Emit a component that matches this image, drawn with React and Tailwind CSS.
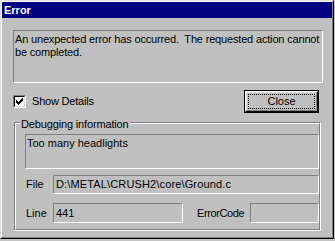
import React from "react";

function Sunken({ className = "", children }) {
  return (
    <div
      className={
        "border border-t-[#808080] border-l-[#808080] border-r-white border-b-white " +
        className
      }
    >
      {children}
    </div>
  );
}

function CheckMark() {
  const px = [
    [6, 0],
    [5, 1], [6, 1],
    [0, 2], [4, 2], [5, 2], [6, 2],
    [0, 3], [1, 3], [3, 3], [4, 3], [5, 3],
    [0, 4], [1, 4], [2, 4], [3, 4], [4, 4],
    [1, 5], [2, 5], [3, 5],
    [2, 6],
  ];
  return (
    <svg width="7" height="7" viewBox="0 0 7 7" shapeRendering="crispEdges">
      {px.map(([x, y]) => (
        <rect key={x + "-" + y} x={x} y={y} width="1" height="1" fill="#000" />
      ))}
    </svg>
  );
}

export default function App() {
  return (
    <div className="w-[335px] h-[241px] bg-[#c4c4c4] font-['Liberation_Sans',Arial,sans-serif] text-[11px] leading-[13px] text-black overflow-hidden">
      <div className="w-[334px] h-[239px] border border-t-[#dfdfdf] border-l-[#dfdfdf] border-r-black border-b-black">
        <div className="h-full border border-t-white border-l-white border-r-[#808080] border-b-[#808080] bg-[#c0c0c0]">
          {/* Title bar */}
          <div className="h-[16px] bg-[#000080] text-white font-bold pl-[2px] flex items-center">
            Error
          </div>

          {/* Body */}
          <div className="pt-[12px] pl-[11px]">
            <Sunken className="w-[310px] h-[53px] pt-[2px] pl-[1px] overflow-hidden">
              <div className="whitespace-pre tracking-[-0.17px]">
                {"An unexpected error has occurred.  The requested action cannot"}
              </div>
              <div className="whitespace-pre tracking-[-0.17px]">be completed.</div>
            </Sunken>

            {/* Checkbox + button row */}
            <div className="mt-[7px] w-[306px] h-[23px] flex items-center justify-between">
              <div className="flex items-center">
                <div className="w-[13px] h-[13px] border border-t-[#808080] border-l-[#808080] border-r-white border-b-white">
                  <div className="w-full h-full border border-t-black border-l-black border-r-[#dfdfdf] border-b-[#dfdfdf] bg-white flex items-center justify-center">
                    <CheckMark />
                  </div>
                </div>
                <span className="ml-[6px] tracking-[-0.2px]">Show Details</span>
              </div>
              <div className="w-[75px] h-[23px] border border-black">
                <div className="h-full border border-t-white border-l-white border-r-black border-b-black">
                  <div className="h-full border border-t-[#dfdfdf] border-l-[#dfdfdf] border-r-[#808080] border-b-[#808080] p-[1px]">
                    <div className="h-full border border-dotted border-black flex items-center justify-center">
                      Close
                    </div>
                  </div>
                </div>
              </div>
            </div>

            {/* Group box */}
            <div className="relative mt-[9px] ml-[1px] w-[307px] h-[109px] border border-t-[#808080] border-l-[#808080] border-r-white border-b-white">
              <div className="absolute top-[-5px] left-[5px] px-[1px] bg-[#c0c0c0] leading-[13px] tracking-[-0.15px]">
                Debugging information
              </div>
              <div className="h-full border border-t-white border-l-white border-r-[#808080] border-b-[#808080] pt-[10px] pl-[9px]">
                <Sunken className="h-[35px] pt-[2px] pl-[1px]">Too many headlights</Sunken>

                <div className="mt-[6px] flex items-center h-[19px]">
                  <span className="w-[28px] pl-[1px]">File</span>
                  <Sunken className="flex-1 h-[19px] pl-[2px] flex items-center tracking-[0.14px]">
                    {"D:\\METAL\\CRUSH2\\core\\Ground.c"}
                  </Sunken>
                </div>

                <div className="mt-[9px] flex items-center h-[20px]">
                  <span className="w-[28px] pl-[1px]">Line</span>
                  <Sunken className="w-[130px] h-[20px] pl-[2px] flex items-center">441</Sunken>
                  <span className="ml-[14px] w-[53px] tracking-[-0.4px]">ErrorCode</span>
                  <Sunken className="flex-1 h-[20px]" />
                </div>
              </div>
            </div>
          </div>
        </div>
      </div>
    </div>
  );
}
